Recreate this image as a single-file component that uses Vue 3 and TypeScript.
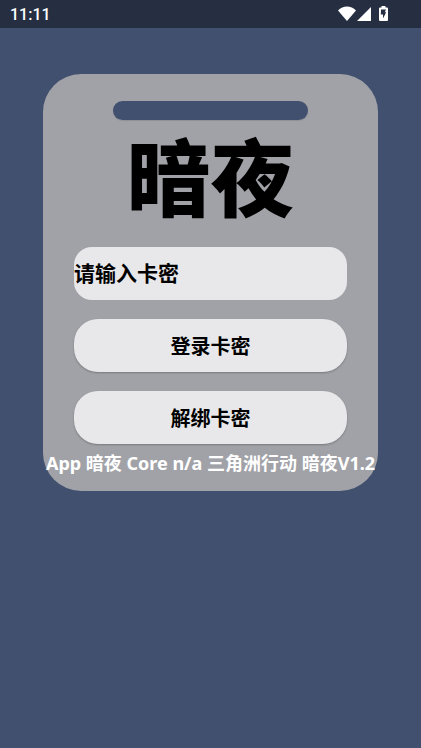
<script setup lang="ts">
import { ref } from 'vue'

const time = ref('11:11')
const cardKey = ref('')
const info = 'App 暗夜 Core n/a 三角洲行动 暗夜V1.2'
</script>

<template>
  <div class="screen">
    <header class="status">
      <time>{{ time }}</time>
      <div class="icons">
        <svg width="18" height="15" viewBox="0 0 18 15" aria-hidden="true">
          <path d="M0 4.5C5 -.7 13 -.7 18 4.5L9 15Z" fill="#fff" />
        </svg>
        <svg width="14" height="14" viewBox="0 0 14 14" aria-hidden="true">
          <path d="M14 0V14H0Z" fill="#fff" />
        </svg>
        <svg class="battery" width="9" height="15" viewBox="0 0 9 15" aria-hidden="true">
          <path d="M2.5 0H6.5V1.5H8Q9 1.5 9 2.5V14Q9 15 8 15H1Q0 15 0 14V2.5Q0 1.5 1 1.5H2.5Z" fill="#fff" />
          <path d="M2 3.5H7L5.8 6.2H7.2L4 12.5V8.5H1.8Z" fill="#262f42" />
        </svg>
      </div>
    </header>
    <main class="stage">
      <form class="card" @submit.prevent>
        <div class="slot"></div>
        <h1>暗夜</h1>
        <input v-model="cardKey" class="field" type="text" placeholder="请输入卡密" aria-label="请输入卡密" />
        <button class="action" type="submit">登录卡密</button>
        <button class="action" type="button">解绑卡密</button>
        <p>{{ info }}</p>
      </form>
    </main>
  </div>
</template>

<style>
body {
  background: #41506f;
}
</style>

<style scoped>
.screen {
  min-height: 100vh;
  background: #41506f;
  font-family: "Noto Sans", "Noto Sans CJK SC", sans-serif;
}
.status {
  display: flex;
  align-items: center;
  justify-content: space-between;
  box-sizing: border-box;
  height: 28px;
  padding: 1px 33px 0 10px;
  background: #262f42;
  color: #fff;
  font: 500 16px/28px Roboto, sans-serif;
}
.icons {
  display: flex;
  align-items: center;
  gap: 1px;
  padding-bottom: 2px;
}
.battery {
  margin-left: 7px;
}
.stage {
  padding: 46px 43px;
}
.card {
  display: flex;
  flex-direction: column;
  box-sizing: border-box;
  padding: 27px 31px 16px;
  border-radius: 38px;
  background: #a1a2a7;
}
.slot {
  align-self: center;
  width: 195px;
  height: 19px;
  border-radius: 10px;
  background: #41506f;
  box-shadow: 0 1px 1px #8e9097;
}
h1 {
  margin: 4px 0 23px;
  color: #000;
  font-family: "Noto Sans CJK SC", sans-serif;
  font-weight: 900;
  font-size: 84px;
  line-height: 100px;
  text-align: center;
}
.field,
.action {
  box-sizing: border-box;
  width: 100%;
  height: 53px;
  margin: 0 0 19px;
  border: 0;
  background: #e8e8ea;
  color: #000;
  font-family: "Noto Sans CJK SC", sans-serif;
  font-weight: 700;
}
.field {
  padding: 0 0 4px;
  border-radius: 18px;
  font-size: 21px;
}
.field::placeholder {
  color: #000;
  opacity: 1;
}
.action {
  padding: 0;
  border-radius: 24px;
  font-size: 20px;
  box-shadow: 0 1px 2px rgba(0, 0, 0, 0.25);
}
p {
  margin: -12px -31px 0;
  color: #fff;
  font-family: "Noto Sans", "Noto Sans CJK SC", sans-serif;
  font-weight: 700;
  font-size: 18px;
  line-height: 24px;
  text-align: center;
  white-space: nowrap;
}
</style>
